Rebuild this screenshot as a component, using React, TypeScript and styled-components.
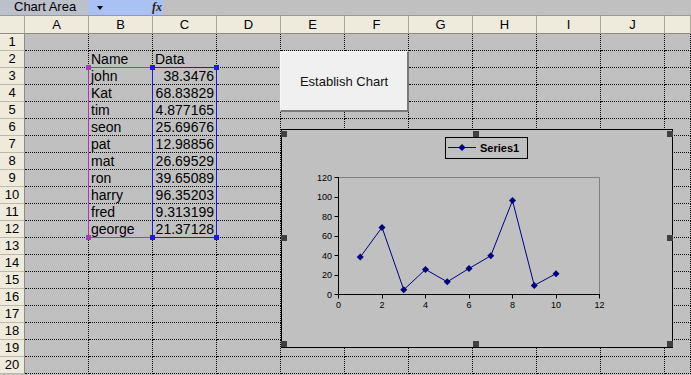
import React from "react";
import styled, { createGlobalStyle, css } from "styled-components";

const GlobalStyle = createGlobalStyle`
  * { box-sizing: border-box; }
  html, body { margin: 0; padding: 0; background: #c0c0c0; overflow: hidden; }
  body { font-family: "Liberation Sans", Arial, sans-serif; }
`;

const Page = styled.div`
  width: 691px;
  height: 375px;
  overflow: hidden;
  background: #c0c0c0;
`;

const TopBar = styled.div`
  display: flex;
  height: 15px;
  background: #c0c0c0;
`;

const NameBox = styled.div`
  width: 88px;
  background: #bcc0ca;
  font-size: 13px;
  line-height: 13px;
  padding-left: 14px;
  color: #000;
  white-space: nowrap;
`;

const FormulaTools = styled.div`
  width: 75px;
  background: #a9c1f3;
  display: flex;
  align-items: center;
  justify-content: space-between;
  padding: 0 1px 0 9px;
`;

const DropArrow = styled.span`
  width: 0;
  height: 0;
  border-left: 3.5px solid transparent;
  border-right: 3.5px solid transparent;
  border-top: 4px solid #000;
  margin-top: 1px;
`;

const Fx = styled.i`
  font-family: "Liberation Serif", serif;
  font-size: 12px;
  font-weight: bold;
  color: #222;
  line-height: 13px;
`;

const gridTemplate = css`
  display: grid;
  grid-template-columns: 25px repeat(10, 64px) 1fr;
  grid-template-rows: 19px repeat(20, 17px);
`;

const Sheet = styled.div`
  position: relative;
`;

const CellGrid = styled.div`
  ${gridTemplate}
`;

const OverlayGrid = styled.div`
  ${gridTemplate}
  position: absolute;
  inset: 0;
  pointer-events: none;
`;

const HeaderCell = styled.div`
  background: #eeebdd;
  border-top: 1px solid #9c9a90;
  border-bottom: 1px solid #8e8c80;
  border-right: 1px solid #aca899;
  font-size: 13px;
  line-height: 17px;
  text-align: center;
  color: #000;
`;

const RowHeader = styled.div`
  background: #eeebdd;
  border-right: 1px solid #8e8c80;
  border-bottom: 1px solid #bdbaab;
  font-size: 13px;
  line-height: 16px;
  text-align: center;
  color: #000;
`;

const Cell = styled.div<{ $align?: "left" | "right" }>`
  background: #c0c0c0;
  border-right: 1px dotted #000;
  border-bottom: 1px dotted #000;
  font-size: 14px;
  line-height: 17px;
  padding: 0 2px;
  text-align: ${(p) => p.$align ?? "left"};
  white-space: nowrap;
  overflow: hidden;
  color: #000;
`;

/* A coloured reference range, placed on the sheet grid by column and rows */
const RangeBox = styled.div<{ $color: string; $col: number; $fromRow: number; $toRow: number }>`
  position: relative;
  grid-column: ${(p) => p.$col + 1};
  grid-row: ${(p) => p.$fromRow + 1} / ${(p) => p.$toRow + 2};
  margin: -1px 0 0 -1px;
  border: 1px solid ${(p) => p.$color};
  color: ${(p) => p.$color};
`;

type Corner = "tl" | "tr" | "bl" | "br";

const RangeHandle = styled.span<{ $corner: Corner }>`
  position: absolute;
  width: 5px;
  height: 5px;
  background: currentColor;
  ${(p) => (p.$corner[0] === "t" ? "top: -3px;" : "bottom: -3px;")}
  ${(p) => (p.$corner[1] === "l" ? "left: -3px;" : "right: -3px;")}
`;

const ChartButton = styled.button`
  position: absolute;
  left: 280px;
  top: 36px;
  width: 129px;
  height: 61px;
  background: #f0f0f0;
  border: none;
  border-top: 1px solid #f8f8f8;
  border-left: 1px solid #f8f8f8;
  border-right: 2px solid #7a7a7a;
  border-bottom: 2px solid #7a7a7a;
  font-family: "Liberation Sans", Arial, sans-serif;
  font-size: 13px;
  color: #111;
  padding: 0;
  cursor: default;
`;

const ChartArea = styled.div`
  position: absolute;
  left: 281px;
  top: 114px;
  width: 392px;
  height: 219px;
  background: #c0c0c0;
  border: 1px solid #000;
`;

type HPos = "left" | "center" | "right";
type VPos = "top" | "middle" | "bottom";

const ChartHandle = styled.div<{ $h: HPos; $v: VPos }>`
  position: absolute;
  width: 6px;
  height: 6px;
  background: #404040;
  ${(p) => (p.$h === "left" ? "left: -1px;" : p.$h === "right" ? "right: -1px;" : "left: calc(50% - 4px);")}
  ${(p) => (p.$v === "top" ? "top: 1px;" : p.$v === "bottom" ? "bottom: 0;" : "top: calc(50% - 4px);")}
`;

const names = ["john", "Kat", "tim", "seon", "pat", "mat", "ron", "harry", "fred", "george"];
const values = [38.3476, 68.83829, 4.877165, 25.69676, 12.98856, 26.69529, 39.65089, 96.35203, 9.313199, 21.37128];
const valueText = ["38.3476", "68.83829", "4.877165", "25.69676", "12.98856", "26.69529", "39.65089", "96.35203", "9.313199", "21.37128"];
const cols = ["A", "B", "C", "D", "E", "F", "G", "H", "I", "J", ""];

const PL = 56.5;
const PR = 317.5;
const PT = 47.5;
const PB = 164.5;
const xs = (v: number) => PL + (v * (PR - PL)) / 12;
const ys = (v: number) => PB - (v * (PB - PT)) / 120;
const snap = (v: number) => Math.round(v - 0.5) + 0.5;
const FONT = "Liberation Sans, Arial, sans-serif";

const Diamond: React.FC<{ x: number; y: number }> = ({ x, y }) => (
  <polygon points={`${x},${y - 3.5} ${x + 3.5},${y} ${x},${y + 3.5} ${x - 3.5},${y}`} fill="#000080" />
);

const ChartSvg: React.FC = () => {
  const pts = values.map((v, i) => [xs(i + 1), ys(v)] as [number, number]);
  return (
    <svg width="390" height="217" viewBox="0 0 390 217" style={{ display: "block" }}>
      <rect x={163.5} y={7.5} width={82} height={21} fill="#c0c0c0" stroke="#000" strokeWidth={1} />
      <line x1={166} y1={17.5} x2={194} y2={17.5} stroke="#000080" strokeWidth={1} />
      <Diamond x={180} y={17.5} />
      <text x={198} y={21.5} fontFamily={FONT} fontSize={11} fontWeight="bold" fill="#000">
        Series1
      </text>
      <polyline points={`${PL},${PT} ${PR},${PT} ${PR},${PB}`} fill="none" stroke="#808080" strokeWidth={1} />
      <line x1={PL} y1={PT - 0.5} x2={PL} y2={PB} stroke="#000" strokeWidth={1} />
      <line x1={PL} y1={PB} x2={PR + 0.5} y2={PB} stroke="#000" strokeWidth={1} />
      {[0, 20, 40, 60, 80, 100, 120].map((v) => (
        <g key={`y${v}`}>
          <line x1={PL - 4} y1={snap(ys(v))} x2={PL} y2={snap(ys(v))} stroke="#000" strokeWidth={1} />
          <text x={50} y={ys(v) + 3} textAnchor="end" fontFamily={FONT} fontSize={9} fill="#000">
            {v}
          </text>
        </g>
      ))}
      {[0, 2, 4, 6, 8, 10, 12].map((v) => (
        <g key={`x${v}`}>
          <line x1={snap(xs(v))} y1={PB} x2={snap(xs(v))} y2={PB + 4} stroke="#000" strokeWidth={1} />
          <text x={xs(v)} y={178} textAnchor="middle" fontFamily={FONT} fontSize={9} fill="#000">
            {v}
          </text>
        </g>
      ))}
      <polyline points={pts.map((p) => p.join(",")).join(" ")} fill="none" stroke="#000080" strokeWidth={1} />
      {pts.map(([x, y], i) => (
        <Diamond key={i} x={x} y={y} />
      ))}
    </svg>
  );
};

const cellContent = (row: number, col: number): { text: string; align?: "left" | "right" } => {
  if (row === 2 && col === 1) return { text: "Name" };
  if (row === 2 && col === 2) return { text: "Data" };
  if (row >= 3 && row <= 12) {
    if (col === 1) return { text: names[row - 3] };
    if (col === 2) return { text: valueText[row - 3], align: "right" };
  }
  return { text: "" };
};

const chartHandles: [HPos, VPos][] = [
  ["left", "top"], ["center", "top"], ["right", "top"],
  ["left", "middle"], ["right", "middle"],
  ["left", "bottom"], ["center", "bottom"], ["right", "bottom"],
];

export default function App() {
  const rows = Array.from({ length: 20 }, (_, i) => i + 1);
  return (
    <Page>
      <GlobalStyle />
      <TopBar>
        <NameBox>Chart Area</NameBox>
        <FormulaTools>
          <DropArrow />
          <Fx>fx</Fx>
        </FormulaTools>
      </TopBar>
      <Sheet>
        <CellGrid>
          <HeaderCell />
          {cols.map((c, i) => (
            <HeaderCell key={`h${i}`}>{c}</HeaderCell>
          ))}
          {rows.map((r) => (
            <React.Fragment key={r}>
              <RowHeader>{r}</RowHeader>
              {cols.map((_, ci) => {
                const c = cellContent(r, ci);
                return (
                  <Cell key={ci} $align={c.align}>
                    {c.text}
                  </Cell>
                );
              })}
            </React.Fragment>
          ))}
        </CellGrid>

        <OverlayGrid>
          <RangeBox $color="#b030c8" $col={2} $fromRow={3} $toRow={12}>
            <RangeHandle $corner="tl" />
            <RangeHandle $corner="bl" />
          </RangeBox>
          <RangeBox $color="#1818f0" $col={3} $fromRow={3} $toRow={12}>
            <RangeHandle $corner="tl" />
            <RangeHandle $corner="tr" />
            <RangeHandle $corner="bl" />
            <RangeHandle $corner="br" />
          </RangeBox>
        </OverlayGrid>

        <ChartButton>Establish Chart</ChartButton>

        <ChartArea>
          <ChartSvg />
          {chartHandles.map(([h, v], i) => (
            <ChartHandle key={i} $h={h} $v={v} />
          ))}
        </ChartArea>
      </Sheet>
    </Page>
  );
}
